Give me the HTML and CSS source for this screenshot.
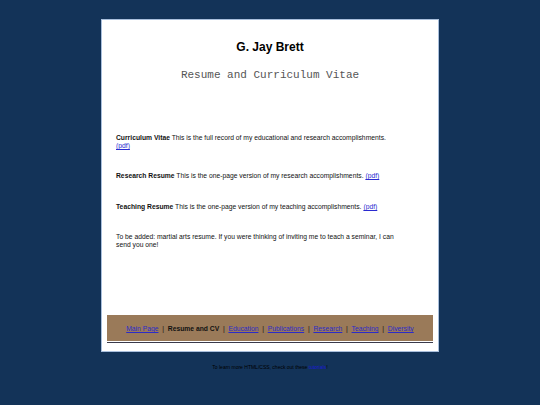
FILE: index.html
```html
<!DOCTYPE html>
<html>
<head>
<meta charset="utf-8">
<link rel="stylesheet" href="styles.css">
</head>
<body>
<div class="page">
  <h1 class="name">G. Jay Brett</h1>
  <h2 class="subtitle">Resume and Curriculum Vitae</h2>
  <div class="content">
    <p class="item item-first"><b>Curriculum Vitae</b> This is the full record of my educational and research accomplishments. <a href="#">(pdf)</a></p>
    <p class="item item-second"><b>Research Resume</b> This is the one-page version of my research accomplishments. <a href="#">(pdf)</a></p>
    <p class="item item-third"><b>Teaching Resume</b> This is the one-page version of my teaching accomplishments. <a href="#">(pdf)</a></p>
    <p class="item item-fourth">To be added: martial arts resume. If you were thinking of inviting me to teach a seminar, I can send you one!</p>
  </div>
  <nav class="nav"><a href="#">Main Page</a>&nbsp; | &nbsp;<b>Resume and CV</b>&nbsp; | &nbsp;<a href="#">Education</a>&nbsp; | &nbsp;<a href="#">Publications</a>&nbsp; | &nbsp;<a href="#">Research</a>&nbsp; | &nbsp;<a href="#">Teaching</a>&nbsp; | &nbsp;<a href="#">Diversity</a></nav>
  <div class="rule"></div>
</div>
<p class="foot">To learn more HTML/CSS, check out these <a href="#">tutorials</a>!</p>
</body>
</html>
```
FILE: styles.css
```css
html, body {
  margin: 0;
  padding: 0;
}
body {
  background: #133358;
  font-family: "Liberation Sans", Arial, sans-serif;
  padding-top: 19px;
}
.page {
  width: 336px;
  height: 331px;
  margin: 0 auto;
  background: #ffffff;
  border: 1px solid #a9bfdc;
  display: flex;
  flex-direction: column;
}
.name {
  margin: 20px 0 0;
  font-size: 12px;
  line-height: 14px;
  text-align: center;
  font-weight: bold;
  color: #000;
}
.subtitle {
  margin: 15px 0 0;
  font-family: "Liberation Mono", "Courier New", monospace;
  font-weight: normal;
  font-size: 11px;
  line-height: 13px;
  text-align: center;
  color: #555;
}
.content {
  padding: 0 0 0 14px;
  width: 284px;
}
.item {
  margin: 0;
  font-size: 6.75px;
  line-height: 8px;
  color: #111;
}
.item-first {
  margin-top: 52px;
}
.item-second {
  margin-top: 22px;
}
.item-third {
  margin-top: 23px;
}
.item-fourth {
  margin-top: 22px;
}
.item a {
  color: #2a2ad0;
}
.nav {
  margin: auto 5px 0;
  height: 24px;
  padding-top: 2px;
  line-height: 24px;
  background: #9a7a59;
  text-align: center;
  font-size: 6.75px;
  color: #111;
}
.nav a {
  color: #2b2bc8;
}
.rule {
  margin: 1px 5px 8px;
  height: 1px;
  background: #3a3a4a;
}
.foot {
  margin: 12px 0 0;
  text-align: center;
  font-size: 5px;
  color: #000;
}
.foot a {
  color: #1a1ad6;
}
```
